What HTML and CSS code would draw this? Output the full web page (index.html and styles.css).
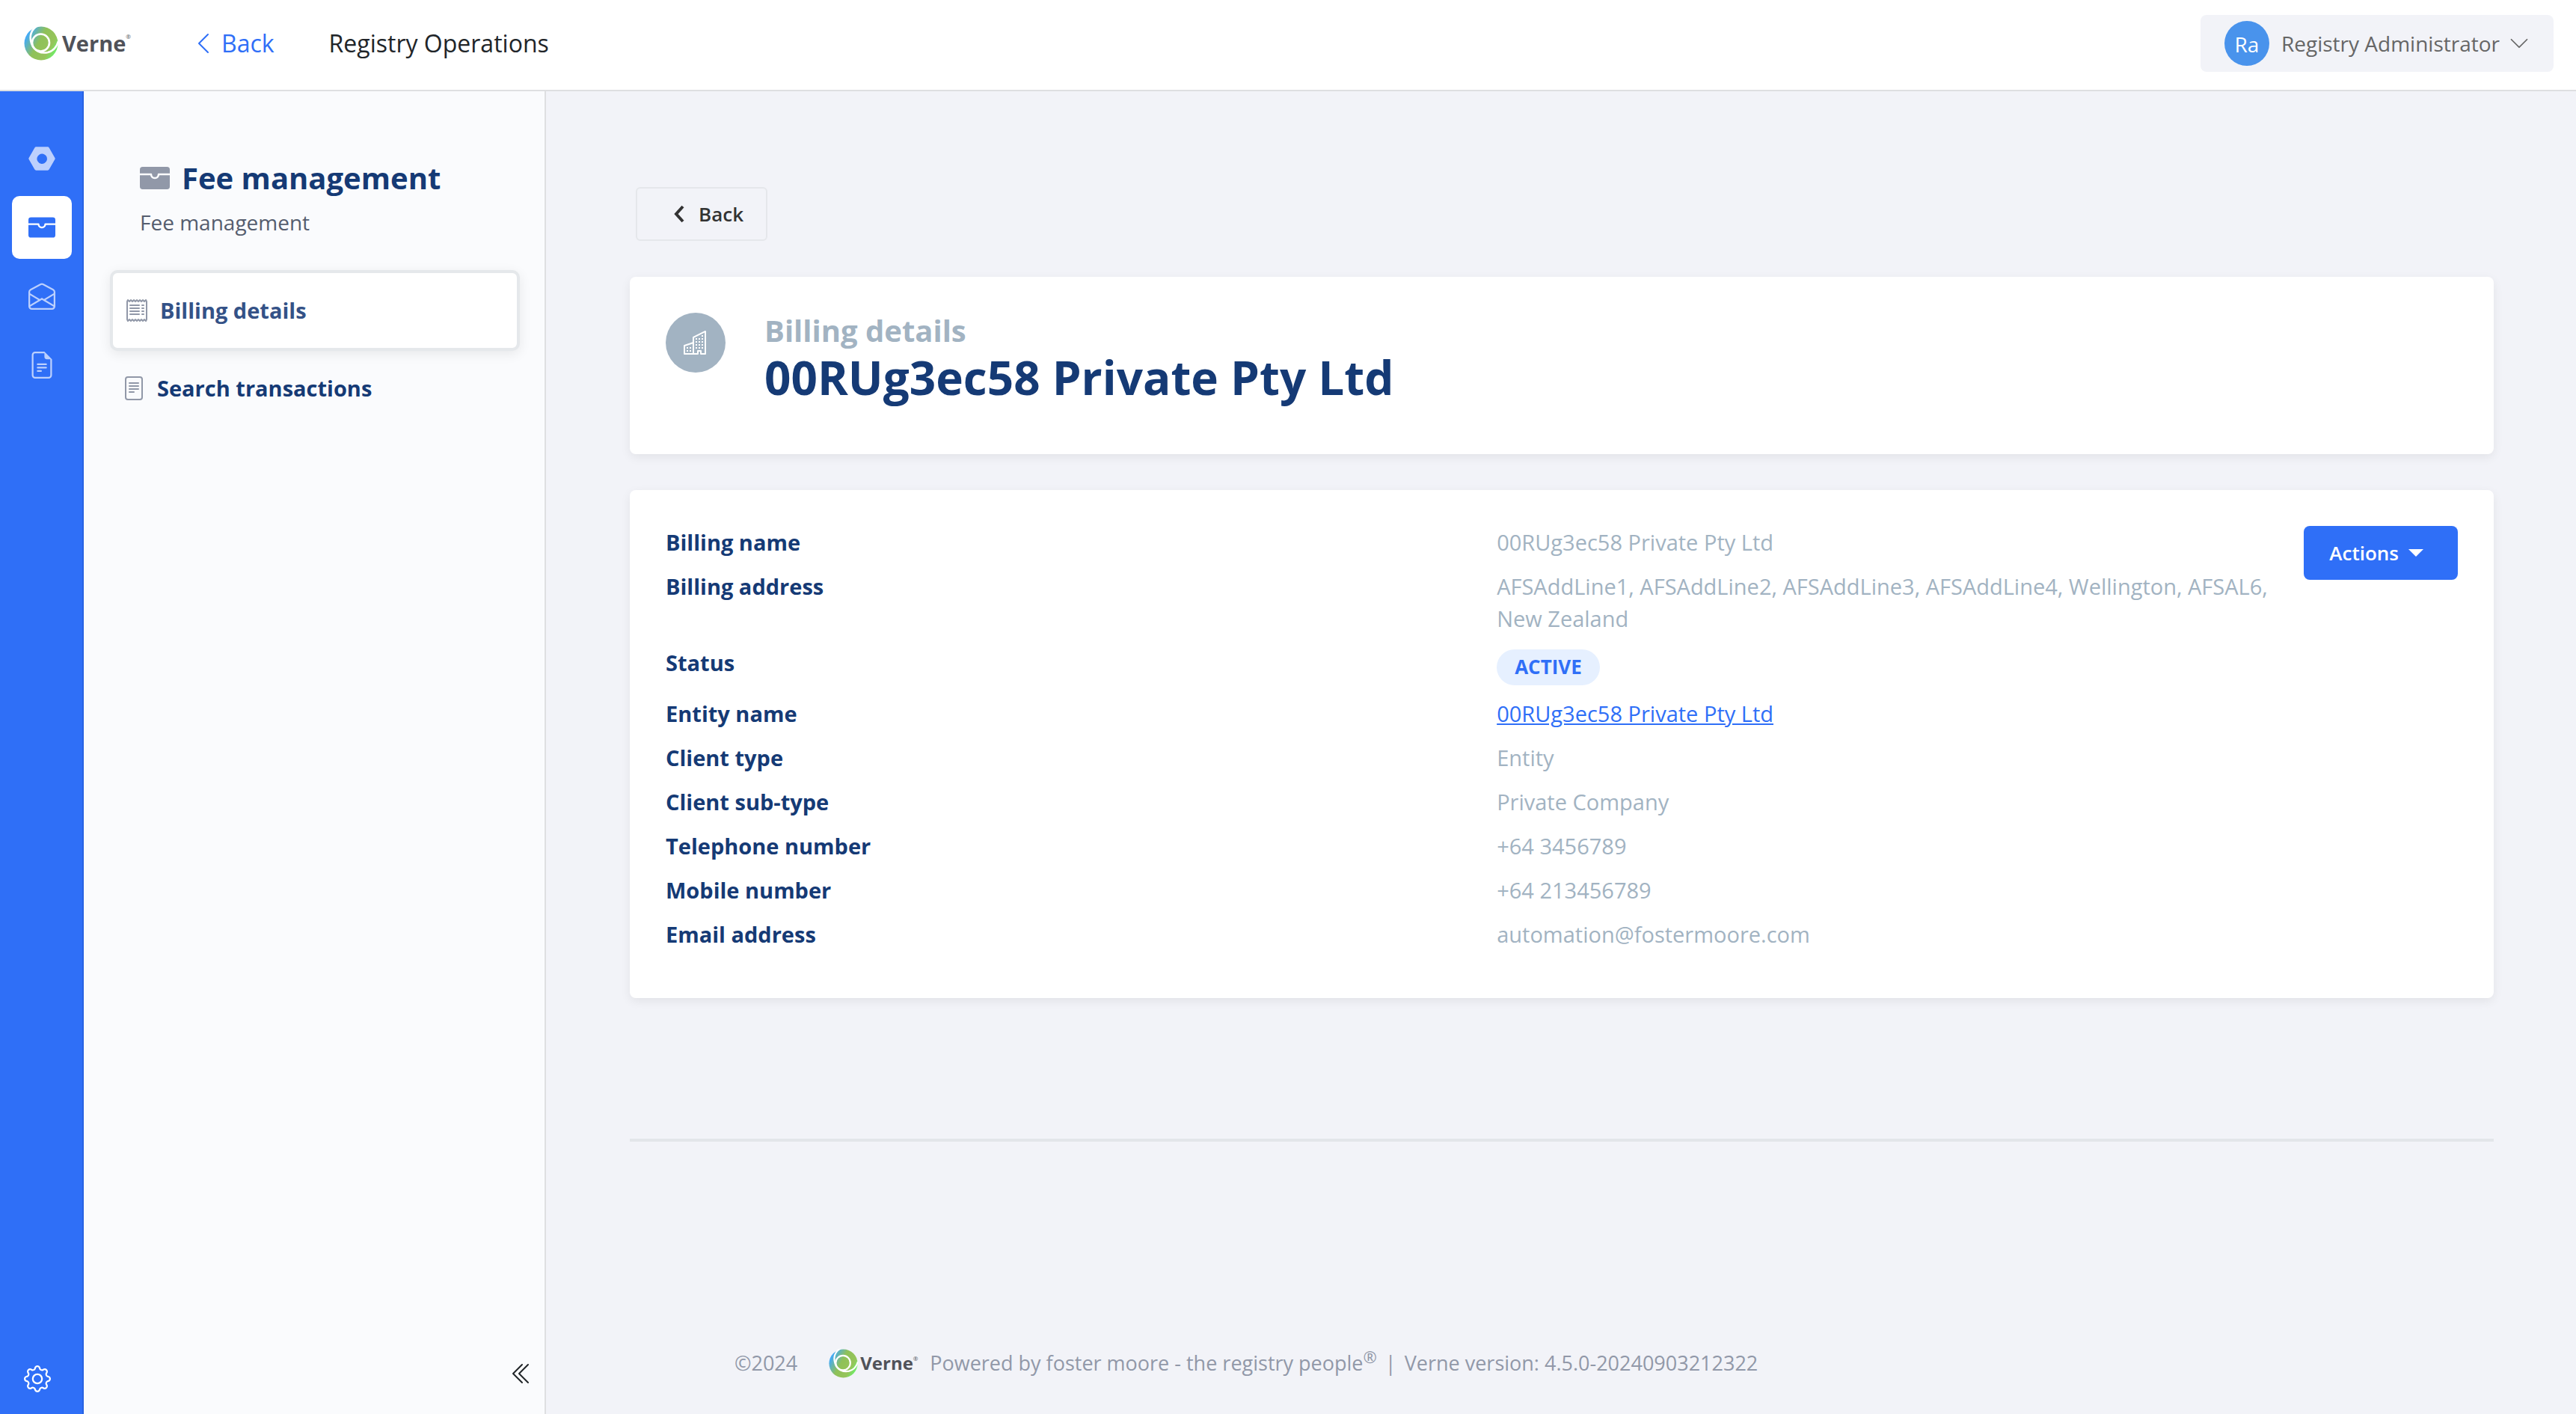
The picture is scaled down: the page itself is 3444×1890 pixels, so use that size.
FILE: index.html
```html
<!DOCTYPE html>
<html lang="en">
<head>
<meta charset="utf-8">
<meta name="viewport" content="width=device-width, initial-scale=1">
<title>Billing details - Registry Operations</title>
<link rel="stylesheet" href="styles.css">
</head>
<body>
<svg class="defs" aria-hidden="true">
  <defs>
    <linearGradient id="ring" x1="0" y1="0.25" x2="1" y2="0.8">
      <stop offset="0.05" stop-color="#3fa9ff"/>
      <stop offset="0.42" stop-color="#8fc158"/>
      <stop offset="0.75" stop-color="#96c45a"/>
      <stop offset="1" stop-color="#5dff6e"/>
    </linearGradient>
    <symbol id="verne" viewBox="0 0 46 46">
      <circle cx="23" cy="23" r="22.500" fill="url(#ring)"/>
      <circle cx="22.500" cy="22" r="11.500" fill="none" stroke="#fff" stroke-width="2.600"/>
      <path d="M19 -1C9 4 7 14 10 23C13 33 23 37 32 35C40 33 44 27 46 20" fill="none" stroke="#fff" stroke-width="2.600"/>
    </symbol>
    <symbol id="wallet" viewBox="0 0 16 16">
      <path d="M1.500 2A1.500 1.500 0 0 0 0 3.500v2h6a.5.5 0 0 1 .5.5c0 .253.08.644.306.958.207.288.557.542 1.194.542s.987-.254 1.194-.542C9.420 6.644 9.500 6.253 9.500 6a.5.5 0 0 1 .5-.5h6v-2A1.500 1.500 0 0 0 14.500 2z"/>
      <path d="M16 6.500h-5.551a2.700 2.700 0 0 1-.443 1.042C9.613 8.088 8.963 8.500 8 8.500s-1.613-.412-2.006-.958A2.700 2.700 0 0 1 5.551 6.500H0v6A1.500 1.500 0 0 0 1.500 14h13a1.500 1.500 0 0 0 1.500-1.500z"/>
    </symbol>
  </defs>
</svg>

<header class="topbar">
  <a class="logo" href="#" aria-label="Verne home">
    <svg class="logo-mark"><use href="#verne"/></svg>
    <span class="logo-word">Verne</span><span class="logo-reg">®</span>
  </a>
  <a class="topbar-back" href="#">
    <svg class="icon" viewBox="0 0 16 16"><path d="M11.354 1.646a.5.5 0 0 1 0 .708L5.707 8l5.647 5.646a.5.5 0 0 1-.708.708l-6-6a.5.5 0 0 1 0-.708l6-6a.5.5 0 0 1 .708 0z"/></svg>
    Back
  </a>
  <span class="topbar-title">Registry Operations</span>
  <button class="user" type="button">
    <span class="avatar">Ra</span>
    <span>Registry Administrator</span>
    <svg class="user-caret" viewBox="0 0 16 16"><path d="M1.646 4.646a.5.5 0 0 1 .708 0L8 10.293l5.646-5.647a.5.5 0 0 1 .708.708l-6 6a.5.5 0 0 1-.708 0l-6-6a.5.5 0 0 1 0-.708z"/></svg>
  </button>
</header>

<div class="shell">
  <nav class="rail" aria-label="Modules">
    <a class="rail-item" href="#" aria-label="Operations">
      <svg viewBox="0 0 16 16"><path d="M4.580 1a1 1 0 0 0-.868.504l-3.428 6a1 1 0 0 0 0 .992l3.428 6A1 1 0 0 0 4.580 15h6.840a1 1 0 0 0 .868-.504l3.429-6a1 1 0 0 0 0-.992l-3.429-6A1 1 0 0 0 11.420 1zm5.018 9.696a3 3 0 1 1-3-5.196 3 3 0 0 1 3 5.196"/></svg>
    </a>
    <a class="rail-item rail-item-active" href="#" aria-label="Fee management">
      <svg><use href="#wallet"/></svg>
    </a>
    <a class="rail-item" href="#" aria-label="Messages">
      <svg viewBox="0 0 16 16"><path d="M8.470 1.318a1 1 0 0 0-.94 0l-6 3.200A1 1 0 0 0 1 5.400v.817l5.750 3.450L8 8.917l1.250.75L15 6.217V5.400a1 1 0 0 0-.53-.882zM15 7.383l-4.778 2.867L15 13.117zm-.035 6.880L8 10.082l-6.965 4.180A1 1 0 0 0 2 15h12a1 1 0 0 0 .965-.738ZM1 13.116l4.778-2.867L1 7.383v5.734ZM7.059.435a2 2 0 0 1 1.882 0l6 3.200A2 2 0 0 1 16 5.400V14a2 2 0 0 1-2 2H2a2 2 0 0 1-2-2V5.400a2 2 0 0 1 1.059-1.765z"/></svg>
    </a>
    <a class="rail-item" href="#" aria-label="Documents">
      <svg viewBox="0 0 16 16"><path d="M5.500 7a.5.5 0 0 0 0 1h5a.5.5 0 0 0 0-1zM5 9.500a.5.5 0 0 1 .5-.5h5a.5.5 0 0 1 0 1h-5a.5.5 0 0 1-.5-.5m0 2a.5.5 0 0 1 .5-.5h2a.5.5 0 0 1 0 1h-2a.5.5 0 0 1-.5-.5"/><path d="M9.500 0H4a2 2 0 0 0-2 2v12a2 2 0 0 0 2 2h8a2 2 0 0 0 2-2V4.500zm0 1v2A1.500 1.500 0 0 0 11 4.500h2V14a1 1 0 0 1-1 1H4a1 1 0 0 1-1-1V2a1 1 0 0 1 1-1z"/></svg>
    </a>
    <a class="rail-settings" href="#" aria-label="Settings">
      <svg viewBox="0 0 16 16"><path d="M8 4.754a3.246 3.246 0 1 0 0 6.492 3.246 3.246 0 0 0 0-6.492M5.754 8a2.246 2.246 0 1 1 4.492 0 2.246 2.246 0 0 1-4.492 0"/><path d="M9.796 1.343c-.527-1.790-3.065-1.790-3.592 0l-.094.319a.873.873 0 0 1-1.255.52l-.292-.16c-1.640-.892-3.433.902-2.540 2.541l.159.292a.873.873 0 0 1-.52 1.255l-.319.094c-1.790.527-1.790 3.065 0 3.592l.319.094a.873.873 0 0 1 .52 1.255l-.16.292c-.892 1.640.901 3.434 2.541 2.540l.292-.159a.873.873 0 0 1 1.255.52l.094.319c.527 1.790 3.065 1.790 3.592 0l.094-.319a.873.873 0 0 1 1.255-.52l.292.16c1.640.893 3.434-.902 2.540-2.541l-.159-.292a.873.873 0 0 1 .52-1.255l.319-.094c1.790-.527 1.790-3.065 0-3.592l-.319-.094a.873.873 0 0 1-.52-1.255l.16-.292c.893-1.640-.902-3.433-2.541-2.540l-.292.159a.873.873 0 0 1-1.255-.52zm-2.633.283c.246-.835 1.428-.835 1.674 0l.094.319a1.873 1.873 0 0 0 2.693 1.115l.291-.16c.764-.415 1.600.42 1.184 1.185l-.159.292a1.873 1.873 0 0 0 1.116 2.692l.318.094c.835.246.835 1.428 0 1.674l-.319.094a1.873 1.873 0 0 0-1.115 2.693l.16.291c.415.764-.42 1.600-1.185 1.184l-.291-.159a1.873 1.873 0 0 0-2.693 1.116l-.094.318c-.246.835-1.428.835-1.674 0l-.094-.319a1.873 1.873 0 0 0-2.692-1.115l-.292.16c-.764.415-1.600-.42-1.184-1.185l.159-.291A1.873 1.873 0 0 0 1.945 8.930l-.319-.094c-.835-.246-.835-1.428 0-1.674l.319-.094A1.873 1.873 0 0 0 3.060 4.377l-.16-.292c-.415-.764.42-1.600 1.185-1.184l.292.159a1.873 1.873 0 0 0 2.692-1.115z"/></svg>
    </a>
  </nav>

  <aside class="sidebar">
    <h2 class="sidebar-title"><svg><use href="#wallet"/></svg>Fee management</h2>
    <p class="sidebar-sub">Fee management</p>
    <nav class="menu" aria-label="Fee management">
      <a class="menu-item menu-item-active" href="#" aria-current="page">
        <svg class="icon" viewBox="0 0 16 16"><path d="M1.920.506a.5.5 0 0 1 .434.14L3 1.293l.646-.647a.5.5 0 0 1 .708 0L5 1.293l.646-.647a.5.5 0 0 1 .708 0L7 1.293l.646-.647a.5.5 0 0 1 .708 0L9 1.293l.646-.647a.5.5 0 0 1 .708 0l.646.647.646-.647a.5.5 0 0 1 .708 0l.646.647.646-.647a.5.5 0 0 1 .801.130l.5 1A.5.5 0 0 1 15 2v12a.5.5 0 0 1-.053.224l-.5 1a.5.5 0 0 1-.8.13L13 14.707l-.646.647a.5.5 0 0 1-.708 0L11 14.707l-.646.647a.5.5 0 0 1-.708 0L9 14.707l-.646.647a.5.5 0 0 1-.708 0L7 14.707l-.646.647a.5.5 0 0 1-.708 0L5 14.707l-.646.647a.5.5 0 0 1-.708 0L3 14.707l-.646.647a.5.5 0 0 1-.801-.13l-.5-1A.5.5 0 0 1 1 14V2a.5.5 0 0 1 .053-.224l.5-1a.5.5 0 0 1 .367-.27m.217 1.338L2 2.118v11.764l.137.274.51-.51a.5.5 0 0 1 .707 0l.646.647.646-.646a.5.5 0 0 1 .708 0l.646.646.646-.646a.5.5 0 0 1 .708 0l.646.646.646-.646a.5.5 0 0 1 .708 0l.646.646.646-.646a.5.5 0 0 1 .708 0l.646.646.646-.646a.5.5 0 0 1 .708 0l.509.509.137-.274V2.118l-.137-.274-.51.51a.5.5 0 0 1-.707 0L12 1.707l-.646.647a.5.5 0 0 1-.708 0L10 1.707l-.646.647a.5.5 0 0 1-.708 0L8 1.707l-.646.647a.5.5 0 0 1-.708 0L6 1.707l-.646.647a.5.5 0 0 1-.708 0L4 1.707l-.646.647a.5.5 0 0 1-.708 0z"/><path d="M3 4.500a.5.5 0 0 1 .5-.5h6a.5.5 0 1 1 0 1h-6a.5.5 0 0 1-.5-.5m0 2a.5.5 0 0 1 .5-.5h6a.5.5 0 1 1 0 1h-6a.5.5 0 0 1-.5-.5m0 2a.5.5 0 0 1 .5-.5h6a.5.5 0 1 1 0 1h-6a.5.5 0 0 1-.5-.5m0 2a.5.5 0 0 1 .5-.5h6a.5.5 0 0 1 0 1h-6a.5.5 0 0 1-.5-.5m8-6a.5.5 0 0 1 .5-.5h1a.5.5 0 0 1 0 1h-1a.5.5 0 0 1-.5-.5m0 2a.5.5 0 0 1 .5-.5h1a.5.5 0 0 1 0 1h-1a.5.5 0 0 1-.5-.5m0 2a.5.5 0 0 1 .5-.5h1a.5.5 0 0 1 0 1h-1a.5.5 0 0 1-.5-.5m0 2a.5.5 0 0 1 .5-.5h1a.5.5 0 0 1 0 1h-1a.5.5 0 0 1-.5-.5"/></svg>
        Billing details
      </a>
      <a class="menu-item" href="#">
        <svg class="icon" viewBox="0 0 16 16"><path d="M5 4a.5.5 0 0 0 0 1h6a.5.5 0 0 0 0-1zm-.5 2.500A.5.5 0 0 1 5 6h6a.5.5 0 0 1 0 1H5a.5.5 0 0 1-.5-.5M5 8a.5.5 0 0 0 0 1h6a.5.5 0 0 0 0-1zm0 2a.5.5 0 0 0 0 1h3a.5.5 0 0 0 0-1z"/><path d="M2 2a2 2 0 0 1 2-2h8a2 2 0 0 1 2 2v12a2 2 0 0 1-2 2H4a2 2 0 0 1-2-2zm10-1H4a1 1 0 0 0-1 1v12a1 1 0 0 0 1 1h8a1 1 0 0 0 1-1V2a1 1 0 0 0-1-1"/></svg>
        Search transactions
      </a>
    </nav>
    <button class="collapse" type="button" aria-label="Collapse menu">
      <svg class="icon" viewBox="0 0 16 16"><path d="M8.354 1.646a.5.5 0 0 1 0 .708L2.707 8l5.647 5.646a.5.5 0 0 1-.708.708l-6-6a.5.5 0 0 1 0-.708l6-6a.5.5 0 0 1 .708 0z"/><path d="M12.354 1.646a.5.5 0 0 1 0 .708L6.707 8l5.647 5.646a.5.5 0 0 1-.708.708l-6-6a.5.5 0 0 1 0-.708l6-6a.5.5 0 0 1 .708 0z"/></svg>
    </button>
  </aside>

  <div class="content">
    <main>
      <button class="back" type="button">
        <svg viewBox="0 0 16 26"><path d="M13 3 4 13l9 10"/></svg>
        Back
      </button>

      <section class="card entity">
        <span class="entity-icon">
          <svg class="icon" viewBox="0 0 16 16"><path d="M14.763.075A.5.5 0 0 1 15 .5v15a.5.5 0 0 1-.5.5h-3a.5.5 0 0 1-.5-.5V14h-1v1.500a.5.5 0 0 1-.5.5h-9a.5.5 0 0 1-.5-.5V10a.5.5 0 0 1 .342-.474L6 7.640V4.500a.5.5 0 0 1 .276-.447l8-4a.5.5 0 0 1 .487.022zM6 8.694 1 10.360V15h5V8.694zM7 15h2v-1.500a.5.5 0 0 1 .5-.5h2a.5.5 0 0 1 .5.5V15h2V1.309l-7 3.500V15z"/><path d="M2 11h1v1H2v-1zm2 0h1v1H4v-1zm-2 2h1v1H2v-1zm2 0h1v1H4v-1zm4-4h1v1H8V9zm2 0h1v1h-1V9zm-2 2h1v1H8v-1zm2 0h1v1h-1v-1zm2-2h1v1h-1V9zm0 2h1v1h-1v-1zM8 7h1v1H8V7zm2 0h1v1h-1V7zm2 0h1v1h-1V7zM8 5h1v1H8V5zm2 0h1v1h-1V5zm2 0h1v1h-1V5zm0-2h1v1h-1V3z"/></svg>
        </span>
        <div>
          <p class="entity-kind">Billing details</p>
          <h1 class="entity-name">00RUg3ec58 Private Pty Ltd</h1>
        </div>
      </section>

      <section class="card details">
        <dl class="fields">
          <div class="field"><dt>Billing name</dt><dd>00RUg3ec58 Private Pty Ltd</dd></div>
          <div class="field"><dt>Billing address</dt><dd>AFSAddLine1, AFSAddLine2, AFSAddLine3, AFSAddLine4, Wellington, AFSAL6, New Zealand</dd></div>
          <div class="field"><dt>Status</dt><dd><span class="badge">ACTIVE</span></dd></div>
          <div class="field"><dt>Entity name</dt><dd><a href="#">00RUg3ec58 Private Pty Ltd</a></dd></div>
          <div class="field"><dt>Client type</dt><dd>Entity</dd></div>
          <div class="field"><dt>Client sub-type</dt><dd>Private Company</dd></div>
          <div class="field"><dt>Telephone number</dt><dd>+64 3456789</dd></div>
          <div class="field"><dt>Mobile number</dt><dd>+64 213456789</dd></div>
          <div class="field"><dt>Email address</dt><dd>automation@fostermoore.com</dd></div>
        </dl>
        <button class="actions" type="button">Actions
          <svg viewBox="0 0 20 10"><path d="M0 0h20L10 10z"/></svg>
        </button>
      </section>
    </main>

    <footer class="footer">
      <span>©2024</span>
      <span class="logo logo-small">
        <svg class="logo-mark"><use href="#verne"/></svg>
        <span class="logo-word">Verne</span><span class="logo-reg">®</span>
      </span>
      <span class="powered">Powered by foster moore - the registry people<sup>®</sup></span>
      <span>|</span>
      <span>Verne version: 4.5.0-20240903212322</span>
    </footer>
  </div>
</div>
</body>
</html>
```
FILE: styles.css
```css
* { box-sizing: border-box; }

body {
  margin: 0;
  min-height: 100vh;
  display: flex;
  flex-direction: column;
  font-family: "Open Sans", "Noto Sans", sans-serif;
  font-size: 28px;
  line-height: 40px;
  color: #212529;
  background: #f2f3f8;
}

h1, h2, p, dl, dd { margin: 0; }
a { color: inherit; text-decoration: none; }
button { font: inherit; color: inherit; cursor: pointer; }
svg { display: block; flex: none; fill: currentColor; }

.defs { position: absolute; width: 0; height: 0; }
.icon { width: 32px; height: 32px; }

/* Top bar */
.topbar {
  display: flex;
  align-items: center;
  height: 122px;
  padding: 0 30px 4px 32px;
  border-bottom: 2px solid #dedfe1;
  background: #fff;
  font-size: 32px;
}

.logo {
  display: flex;
  align-items: center;
  width: 144px;
  color: #505259;
}
.logo-mark { width: 46px; height: 46px; margin-right: 5px; }
.logo-word { font-size: 29px; font-weight: 700; }
.logo-reg { align-self: flex-start; font-size: 8px; line-height: 28px; }

.topbar-back {
  display: flex;
  align-items: center;
  gap: 8px;
  margin-left: 80px;
  color: #2f6ff7;
}
.topbar-title { margin-left: 73px; }

.user {
  display: flex;
  align-items: center;
  height: 76px;
  margin-left: auto;
  padding: 0 32px;
  border: 0;
  border-radius: 8px;
  background: #f2f3f8;
  color: #666;
  font-size: 28px;
}
.avatar {
  width: 60px;
  height: 60px;
  margin-right: 16px;
  border-radius: 50%;
  background: #4993ec;
  color: #fff;
  line-height: 62px;
  text-align: center;
}
.user-caret { width: 28px; height: 28px; margin-left: 12px; }

/* Module rail */
.shell { display: flex; flex: 1; }

.rail {
  display: flex;
  flex-direction: column;
  align-items: center;
  gap: 8px;
  width: 112px;
  flex: none;
  padding: 48px 0 29px;
  box-shadow: inset -2px 0 #2862e2;
  background: #2f6ff7;
  color: #bcd0fd;
}
.rail svg { width: 36px; height: 36px; }
.rail-item {
  display: flex;
  align-items: center;
  justify-content: center;
  width: 80px;
  height: 84px;
  border-radius: 10px;
}
.rail-item-active { background: #fff; color: #2f6ff7; }
.rail-settings { margin: auto 12px 0 0; color: #fff; }

/* Section menu */
.sidebar {
  display: flex;
  flex-direction: column;
  width: 618px;
  flex: none;
  padding: 88px 33px 38px 35px;
  border-right: 2px solid #dedfe1;
  background: #fafbfd;
}
.sidebar-title {
  display: flex;
  align-items: center;
  gap: 16px;
  padding-left: 40px;
  font-size: 40px;
  line-height: 56px;
  color: #153a75;
}
.sidebar-title svg { width: 40px; height: 40px; color: #9198a8; }
.sidebar-sub { margin: 11px 0 44px; padding-left: 40px; color: #555d6e; }

.menu-item {
  display: flex;
  align-items: center;
  gap: 15px;
  height: 100px;
  padding: 0 16px;
  color: #153a75;
  font-size: 29px;
  font-weight: 700;
}
.menu-item .icon { color: #9198a8; }
.menu-item-active {
  height: 108px;
  border: 4px solid #e5e8eb;
  border-radius: 10px;
  background: #fff;
  box-shadow: 0 4px 16px rgba(0, 0, 0, 0.08);
  color: #345287;
}
.collapse {
  margin: auto -19px 0 auto;
  padding: 0;
  border: 0;
  background: none;
}

/* Content */
.content {
  display: flex;
  flex-direction: column;
  flex: 1;
  padding: 128px 110px 0 112px;
}
.back {
  display: flex;
  align-items: center;
  gap: 18px;
  height: 72px;
  margin: 0 0 48px 8px;
  padding: 0 30px 0 48px;
  border: 2px solid #e5e7eb;
  border-radius: 6px;
  background: none;
  color: #333;
  font-size: 26px;
  font-weight: 600;
}
.back svg { width: 16px; height: 26px; fill: none; stroke: currentColor; stroke-width: 4; }

.card {
  display: flex;
  padding: 48px;
  border-radius: 8px;
  background: #fff;
  box-shadow: 0 4px 14px rgba(0, 0, 0, 0.07);
}
.card + .card { margin-top: 48px; }

.entity { gap: 52px; }
.entity-icon {
  display: flex;
  align-items: center;
  justify-content: center;
  width: 80px;
  height: 80px;
  border-radius: 50%;
  background: #a2b3c2;
  color: #fff;
}
.entity-kind { color: #a2b3c2; font-size: 40px; font-weight: 700; line-height: 48px; }
.entity-name { margin-bottom: 17px; color: #153a75; font-size: 62px; line-height: 76px; }

.details { align-items: flex-start; }
.fields { flex: 1; font-size: 29px; line-height: 43px; }
.field {
  display: grid;
  grid-template-columns: 1fr 1fr;
  gap: 32px;
  margin-bottom: 16px;
}
.field dt { color: #153a75; font-weight: 700; }
.field dd { color: #a2b3c2; }
.field a { color: #2f6ff7; text-decoration: underline; }
.badge {
  display: block;
  width: fit-content;
  margin-top: 4px;
  padding: 0 24px 2px;
  border-radius: 24px;
  background: #e6f0ff;
  color: #2f6ff7;
  font-size: 26px;
  font-weight: 700;
  line-height: 46px;
}
.actions {
  display: flex;
  align-items: center;
  gap: 13px;
  height: 72px;
  padding: 0 46px 0 34px;
  border: 0;
  border-radius: 8px;
  background: #2f6ff7;
  color: #fff;
  font-size: 26px;
  font-weight: 600;
}
.actions svg { width: 20px; height: 10px; }

/* Footer */
.footer {
  display: flex;
  align-items: center;
  gap: 11px;
  margin-top: 188px;
  padding: 276px 140px 45px;
  border-top: 4px solid #e3e6ea;
  color: #9198a8;
  font-size: 27px;
}
.footer sup { font-size: 22px; line-height: 0; }
.powered { margin-left: 4px; }
.logo-small { width: 120px; margin-left: 31px; }
.logo-small .logo-mark { width: 39px; height: 39px; margin-right: 3px; }
.logo-small .logo-word { font-size: 24px; }
```
